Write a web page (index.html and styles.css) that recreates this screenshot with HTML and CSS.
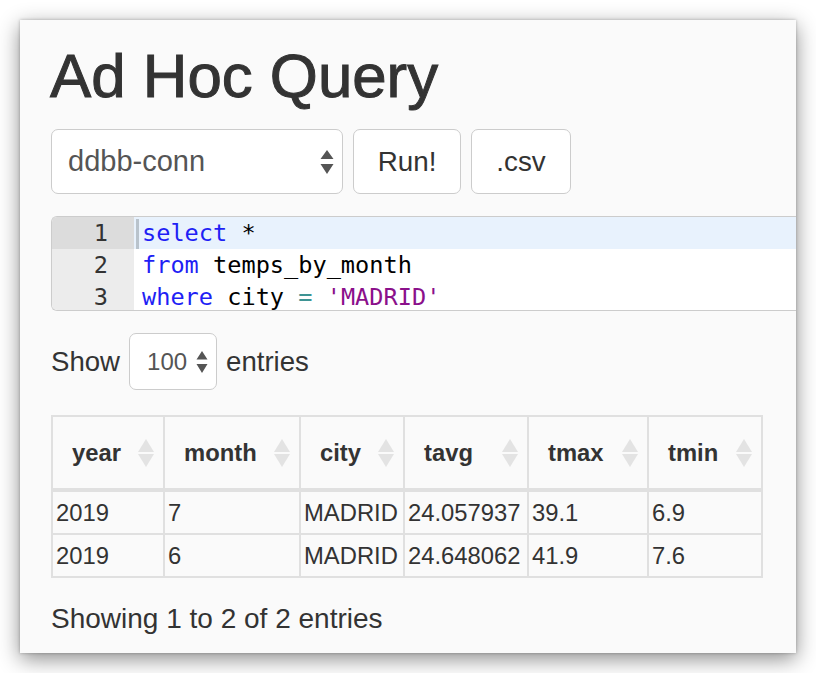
FILE: index.html
```html
<!DOCTYPE html>
<html>
<head>
<meta charset="utf-8">
<link rel="stylesheet" href="styles.css">
</head>
<body>
<div class="window">
  <h1 class="title">Ad Hoc Query</h1>
  <div class="toolbar">
    <div class="select conn">
      <span>ddbb-conn</span>
      <svg class="updown" width="14" height="24" viewBox="0 0 14 24"><path d="M7 0 L13.5 9 L0.5 9 Z M0.5 14 L13.5 14 L7 24 Z" fill="#555"/></svg>
    </div>
    <button class="btn run">Run!</button>
    <button class="btn csv">.csv</button>
  </div>
  <div class="editor">
    <div class="line active"><span class="gutter">1</span><span class="code"><span class="cursor"></span><span class="kw">select</span> *</span></div>
    <div class="line"><span class="gutter">2</span><span class="code"><span class="kw">from</span> temps_by_month</span></div>
    <div class="line"><span class="gutter">3</span><span class="code"><span class="kw">where</span> city <span class="op">=</span> <span class="str">'MADRID'</span></span></div>
  </div>
  <div class="length">
    <span>Show</span>
    <div class="select small">
      <span>100</span>
      <svg class="updown" width="12" height="22" viewBox="0 0 12 22"><path d="M6 0 L11.5 8.5 L0.5 8.5 Z M0.5 13 L11.5 13 L6 22 Z" fill="#555"/></svg>
    </div>
    <span>entries</span>
  </div>
  <table class="grid">
    <colgroup>
      <col class="c1"><col class="c2"><col class="c3"><col class="c4"><col class="c5"><col class="c6">
    </colgroup>
    <thead>
      <tr>
        <th><div class="th"><span>year</span><i class="sort"></i></div></th>
        <th><div class="th"><span>month</span><i class="sort"></i></div></th>
        <th><div class="th"><span>city</span><i class="sort"></i></div></th>
        <th><div class="th"><span>tavg</span><i class="sort"></i></div></th>
        <th><div class="th"><span>tmax</span><i class="sort"></i></div></th>
        <th><div class="th"><span>tmin</span><i class="sort"></i></div></th>
      </tr>
    </thead>
    <tbody>
      <tr><td>2019</td><td>7</td><td>MADRID</td><td>24.057937</td><td>39.1</td><td>6.9</td></tr>
      <tr><td>2019</td><td>6</td><td>MADRID</td><td>24.648062</td><td>41.9</td><td>7.6</td></tr>
    </tbody>
  </table>
  <div class="info">Showing 1 to 2 of 2 entries</div>
</div>
</body>
</html>
```

FILE: styles.css
```css
html, body {
  margin: 0;
  padding: 0;
  background: #ffffff;
}
body {
  padding: 20px;
  font-family: "Liberation Sans", Arial, Helvetica, sans-serif;
  color: #333;
}
.window {
  width: 776px;
  height: 633px;
  box-sizing: border-box;
  background: #fafafa;
  box-shadow: 0 6px 20px rgba(0, 0, 0, 0.45), 0 0 3px rgba(0, 0, 0, 0.25);
  overflow: hidden;
  padding: 22px 0 0 31px;
}
.title {
  margin: 0 0 0 -1px;
  font-size: 61.8px;
  line-height: 67px;
  font-weight: normal;
  color: #333;
  -webkit-text-stroke: 1px #333;
}
.toolbar {
  display: flex;
  gap: 10px;
  margin-top: 20px;
}
.select {
  display: flex;
  align-items: center;
  justify-content: space-between;
  box-sizing: border-box;
  background: #fff;
  border: 1.5px solid #ccc;
  border-radius: 7px;
  color: #555;
}
.conn {
  width: 292px;
  height: 65px;
  padding: 0 8px 0 16px;
  font-size: 29px;
}
.btn {
  box-sizing: border-box;
  height: 65px;
  background: #fff;
  border: 1.5px solid #ccc;
  border-radius: 7px;
  color: #333;
  font-family: "Liberation Sans", Arial, Helvetica, sans-serif;
  font-size: 27.8px;
  padding: 0;
}
.run { width: 108px; }
.csv { width: 100px; }
.editor {
  margin-top: 22px;
  width: 770px;
  height: 95px;
  box-sizing: border-box;
  border: 1.5px solid #ccc;
  border-right: none;
  border-radius: 6px 0 0 6px;
  background: #fff;
  overflow: hidden;
  font-family: "DejaVu Sans Mono", monospace;
  font-size: 23.6px;
  line-height: 32px;
}
.line {
  display: flex;
  height: 32px;
}
.gutter {
  width: 82px;
  flex: none;
  box-sizing: border-box;
  padding-right: 26px;
  text-align: right;
  background: #ececec;
  color: #333;
}
.line.active .gutter {
  background: #dcdcdc;
}
.code {
  flex: 1;
  padding-left: 8px;
  color: #000;
  white-space: pre;
  position: relative;
}
.line.active .code {
  background: #e8f2fd;
}
.cursor {
  position: absolute;
  left: 2px;
  top: 2px;
  width: 3px;
  height: 30px;
  background: #b9c3cc;
}
.kw { color: #1f1ff5; }
.op { color: #3e9494; }
.str { color: #8b108b; }
.length {
  display: flex;
  align-items: center;
  gap: 9px;
  margin-top: 22px;
  font-size: 27.6px;
  color: #333;
}
.small {
  width: 88px;
  height: 57px;
  padding: 0 8px 0 17px;
  font-size: 24px;
}
.grid {
  margin-top: 25px;
  border-collapse: collapse;
  table-layout: fixed;
  width: 712px;
  border: 2px solid #e0e0e0;
  font-size: 23.8px;
  color: #333;
}
.grid th, .grid td {
  border: 2px solid #e0e0e0;
  text-align: left;
}
.grid th {
  height: 71px;
  padding: 0 9px 0 19px;
  font-weight: bold;
  border-bottom-width: 4px;
}
.grid td {
  height: 41px;
  padding: 0 0 0 3px;
  white-space: nowrap;
}
.c1 { width: 112px; }
.c2 { width: 136px; }
.c3 { width: 104px; }
.c4 { width: 124px; }
.c5 { width: 120px; }
.c6 { width: 114px; }
.th {
  display: flex;
  align-items: center;
  justify-content: space-between;
}
.sort {
  display: flex;
  flex-direction: column;
  align-items: center;
  gap: 2px;
}
.sort::before, .sort::after {
  content: "";
  width: 0;
  height: 0;
  border-left: 8.5px solid transparent;
  border-right: 8.5px solid transparent;
}
.sort::before {
  border-bottom: 13px solid #e3e3e3;
}
.sort::after {
  border-top: 13px solid #e3e3e3;
}
.info {
  margin-top: 24px;
  font-size: 28px;
  line-height: 34px;
  color: #333;
}
```
